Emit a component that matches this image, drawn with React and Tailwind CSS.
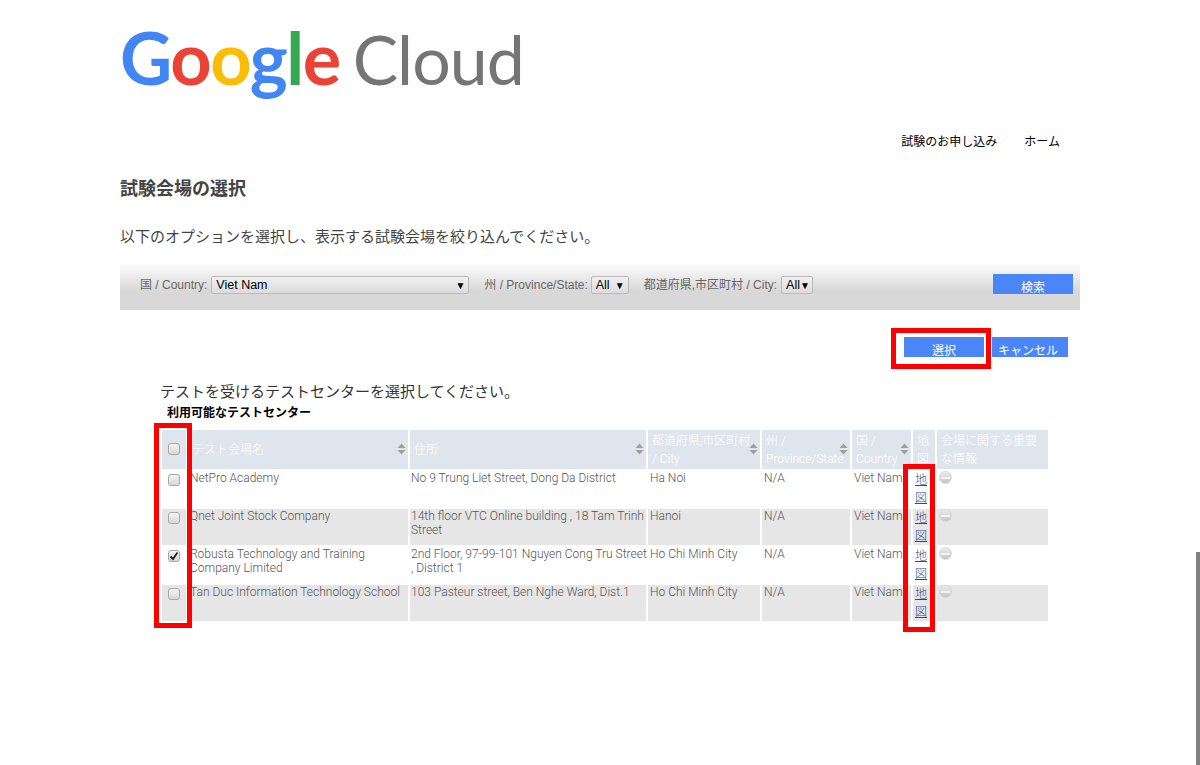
const cjk = 'font-["Liberation_Sans","Noto_Sans_CJK_JP",sans-serif]'

const rows = [
  { name: 'NetPro Academy', address: 'No 9 Trung Liet Street, Dong Da District', city: 'Ha Noi' },
  { name: 'Qnet Joint Stock Company', address: <>14th floor VTC Online building , 18 Tam Trinh<br />Street</>, city: 'Hanoi', gray: true },
  { name: 'Robusta Technology and Training Company Limited', address: <>2nd Floor, 97-99-101 Nguyen Cong Tru Street<br />, District 1</>, city: 'Ho Chi Minh City', checked: true },
  { name: 'Tan Duc Information Technology School', address: '103 Pasteur street, Ben Nghe Ward, Dist.1', city: 'Ho Chi Minh City', gray: true },
]

function Sort() {
  return (
    <svg width="9" height="12" viewBox="0 0 9 12" className="absolute right-[2px] top-[13px]">
      <path d="M4.5 0.5 L8.5 5 H0.5 Z M4.5 11.5 L8.5 7 H0.5 Z" fill="#a0a0a0" />
    </svg>
  )
}

function Check({ checked }) {
  return (
    <span className="flex h-[12px] w-[12px] items-center justify-center rounded-[3px] border border-[#a8a8a8] bg-gradient-to-b from-[#f4f4f4] to-[#d8d8d8]">
      {checked && (
        <svg width="10" height="10" viewBox="0 0 10 10">
          <path d="M1.5 5.5 L4 8 L8.5 1.5" fill="none" stroke="#222" strokeWidth="1.8" />
        </svg>
      )}
    </span>
  )
}

function Minus() {
  return (
    <span className="flex h-[13px] w-[13px] items-center justify-center rounded-full border border-[#d8d8d8] bg-gradient-to-b from-[#ececec] to-[#c4c4c4]">
      <span className="h-[2px] w-[9px] bg-[#f4f4f4]" />
    </span>
  )
}

function Select({ value, w }) {
  return (
    <span className={`flex h-[18px] items-center justify-between rounded-[2px] border border-[#bbb] bg-gradient-to-b from-[#f0f0f0] to-[#dcdcdc] pl-[4px] pr-[3px] pt-[1px] text-[12.5px] text-black ${w}`}>
      {value}
      <span className="text-[10px]">▼</span>
    </span>
  )
}

function Header({ children, sort }) {
  return (
    <th className={`relative bg-[#dfe5ed] py-[1px] pl-[4px] text-left align-middle text-[12px] font-light leading-[18px] text-white ${sort ? 'pr-[10px]' : 'pr-0'}`}>
      {children}
      {sort && <Sort />}
    </th>
  )
}

export default function App() {
  return (
    <div className={`relative h-[765px] w-[1200px] overflow-hidden bg-white ${cjk}`}>
      <div className="mx-auto w-[960px]">
        {/* Logo */}
        <div className='flex h-[121px] items-baseline pt-[14px] font-["Lato",sans-serif] text-[72px] leading-[86px]'>
          <span className="font-bold tracking-[-1.5px]">
            <span className="text-[#4285f4]">G</span>
            <span className="text-[#ea4335]">o</span>
            <span className="text-[#fbbc05]">o</span>
            <span className="text-[#4285f4]">g</span>
            <span className="text-[#34a853]">l</span>
            <span className="text-[#ea4335]">e</span>
          </span>
          <span className="ml-[13px] text-[68px] font-normal tracking-[-1px] text-[#757575]">Cloud</span>
        </div>

        {/* Nav */}
        <div className="flex h-[40px] justify-end gap-[27px] pr-[20px] pt-[12px] text-[12px] text-black">
          <span>試験のお申し込み</span>
          <span>ホーム</span>
        </div>

        <h1 className="h-[56px] pt-[16px] text-[18px] font-bold leading-[24px] text-[#444]">試験会場の選択</h1>
        <p className="h-[45px] pt-[10px] text-[15px] leading-[20px] text-[#444]">以下のオプションを選択し、表示する試験会場を絞り込んでください。</p>

        {/* Filter bar */}
        <div className="flex h-[48px] items-center bg-gradient-to-b from-white to-[#d8d8d8] to-60% pb-[3px] pl-[20px] text-[12px] text-[#666]">
          <span>国 / Country:</span>
          <span className="ml-[4px]"><Select value="Viet Nam" w="w-[258px]" /></span>
          <span className="ml-[15px]">州 / Province/State:</span>
          <span className="ml-[3px]"><Select value="All" w="w-[38px]" /></span>
          <span className="ml-[15px]">都道府県,市区町村 / City:</span>
          <span className="ml-[4px]"><Select value="All" w="w-[32px]" /></span>
          <button className="mb-[1px] ml-[180px] h-[20px] w-[80px] bg-[#4a86f7] pt-[7px] text-[12px] leading-[12px] text-white">検索</button>
        </div>

        {/* Actions */}
        <div className="flex justify-end gap-[8px] pr-[12px] pt-[27px]">
          <button className="h-[20px] w-[80px] bg-[#4a86f7] pt-[8px] text-[12px] leading-[12px] text-white">選択</button>
          <button className="h-[20px] w-[76px] bg-[#4a86f7] pr-[4px] pt-[8px] text-[12px] leading-[12px] text-white">キャンセル</button>
        </div>

        <div className="pl-[40px] pt-[25px]">
          <p className="text-[15px] leading-[20px] text-[#333]">テストを受けるテストセンターを選択してください。</p>
          <p className="pl-[7px] pt-[1px] text-[12px] font-bold leading-[20px] text-black">利用可能なテストセンター</p>

          {/* Centres table */}
          <table className="mt-[5px] w-[888px] table-fixed border-separate border-spacing-[2px] font-['Roboto','Noto_Sans_CJK_JP',sans-serif]">
            <colgroup>
              <col className="w-[24px]" />
              <col className="w-[220px]" />
              <col className="w-[236px]" />
              <col className="w-[112px]" />
              <col className="w-[88px]" />
              <col className="w-[59px]" />
              <col className="w-[22px]" />
              <col className="w-[111px]" />
            </colgroup>
            <thead>
              <tr className="h-[39px]">
                <th className="bg-[#dfe5ed] pb-[2px]">
                  <span className="flex justify-center"><Check /></span>
                </th>
                <Header sort>テスト会場名</Header>
                <Header sort>住所</Header>
                <Header sort><span className="whitespace-nowrap">都道府県,市区町村</span><br />/ City</Header>
                <Header sort>州 / Province/State</Header>
                <Header sort>国 / Country</Header>
                <Header>地図</Header>
                <Header>会場に関する重要な情報</Header>
              </tr>
            </thead>
            <tbody className="text-[12px] font-light leading-[14px] text-[#555]">
              {rows.map((r, i) => {
                const bg = r.gray ? 'bg-[#e6e6e6]' : 'bg-white'
                return (
                  <tr key={i} className="h-[36px]">
                    <td className={`${bg} pt-[3px] align-top`}>
                      <span className="flex justify-center"><Check checked={r.checked} /></span>
                    </td>
                    <td className={`${bg} pl-[2px] align-top`}>{r.name}</td>
                    <td className={`${bg} pl-[1px] align-top whitespace-nowrap`}>{r.address}</td>
                    <td className={`${bg} pl-[2px] align-top`}>{r.city}</td>
                    <td className={`${bg} pl-[2px] align-top`}>N/A</td>
                    <td className={`${bg} pl-[2px] align-top whitespace-nowrap`}>Viet Nam</td>
                    <td className={`${bg} pl-[2px] align-top`}>
                      <a className="block text-[12px] leading-[18px] text-[#1f4e8c] underline">地図</a>
                    </td>
                    <td className={`${bg} pl-[2px] align-top`}><Minus /></td>
                  </tr>
                )
              })}
            </tbody>
          </table>
        </div>
      </div>

      {/* Red highlight boxes */}
      <div className="absolute left-[891px] top-[328px] h-[41px] w-[100px] border-[5px] border-[#f00]" />
      <div className="absolute left-[154px] top-[423px] h-[205px] w-[38px] border-[5px] border-[#f00]" />
      <div className="absolute left-[903px] top-[464px] h-[168px] w-[32px] border-[5px] border-[#f00]" />

      {/* Scrollbar */}
      <div className="absolute right-0 top-[552px] h-[213px] w-[4px] bg-[#808080]" />
    </div>
  )
}
